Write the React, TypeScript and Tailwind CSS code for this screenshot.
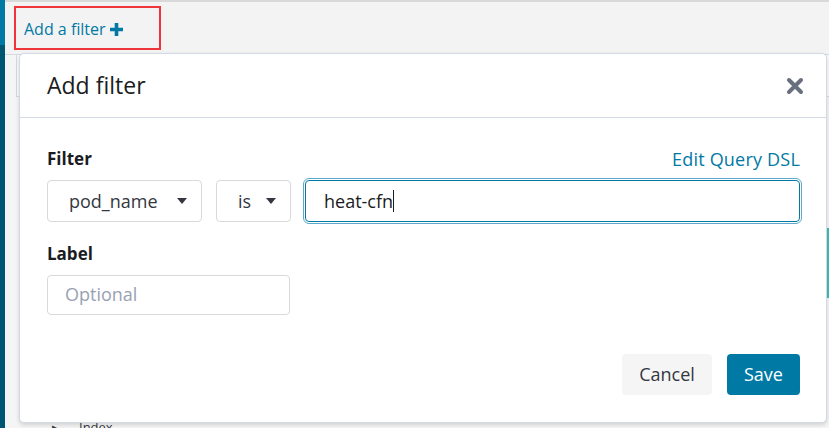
import React from 'react';

const Caret = () => (
  <svg width="10" height="6" viewBox="0 0 10 6" className="shrink-0">
    <path d="M0 0 L10 0 L5 6 Z" fill="#343741" />
  </svg>
);

const App: React.FC = () => {
  return (
    <div
      className="relative w-[829px] h-[428px] overflow-hidden bg-[#f5f5f5] flex"
      style={{ fontFamily: '"Open Sans", "Liberation Sans", sans-serif' }}
    >
      {/* side nav strip */}
      <div className="w-[5px] h-full flex flex-col">
        <div className="h-[45px] bg-[#0079a5]" />
        <div className="flex-1 bg-[#005571]" />
      </div>

      <div className="flex-1 flex flex-col">
        {/* filter bar */}
        <div className="h-[55px] border-t-2 border-[#d9d9d9] bg-[#f3f3f3] border-b border-b-[#d3dae6] pl-[9px] pt-[4px]">
          <div className="w-[147px] h-[44px] border-2 border-[#f0353a] flex items-center pl-[8px] pt-[2px] gap-[4px] text-[16px] text-[#0079a5]">
            <span>Add a filter</span>
            <svg width="13" height="13" viewBox="0 0 13 13">
              <path d="M4.7 0 H8.3 V4.7 H13 V8.3 H8.3 V13 H4.7 V8.3 H0 V4.7 H4.7 Z" fill="#0079a5" />
            </svg>
          </div>
        </div>
        <div className="h-[42px] border-b border-[#d3dae6] ml-[11px] border-l border-l-[#d3dae6] bg-[#fafafa]" />
        <div className="flex-1" />
        <div className="h-[6px] pl-[47px] text-[13px] leading-[10px] text-[#343741] flex gap-[20px]">
          <span>▸</span>
          <span>Index</span>
        </div>
      </div>

      {/* right edge teal marker */}
      <div className="absolute right-0 top-[228px] w-[2px] h-[70px] bg-[#3ebeb0]" />

      {/* popover */}
      <div className="absolute left-[19px] top-[53px] w-[808px] h-[370px] bg-white rounded-[5px] border border-[#d3dae6] shadow-[0_2px_4px_rgba(0,0,0,0.15)] flex flex-col">
        <div className="h-[64px] border-b border-[#d3dae6] flex items-center justify-between pl-[27px] pr-[22px]">
          <span className="text-[23px] text-[#1a1c21]">Add filter</span>
          <svg width="18" height="18" viewBox="0 0 18 18">
            <path d="M3 3 L15 15 M15 3 L3 15" stroke="#69707d" strokeWidth="4" strokeLinecap="round" />
          </svg>
        </div>

        <div className="flex-1 flex flex-col pl-[27px] pr-[26px] pt-[28px]">
          <div className="flex justify-between items-center h-[26px]">
            <span className="text-[17px] font-bold text-[#1a1c21]">Filter</span>
            <span className="text-[18px] text-[#0079a5] tracking-[0.2px]">Edit Query DSL</span>
          </div>
          <div className="flex items-center gap-[14px] mt-[8px]">
            <div className="w-[155px] h-[42px] border border-[#d9d9d9] rounded-[4px] flex items-center justify-between pl-[21px] pr-[14px] text-[18px] text-[#343741]">
              <span>pod_name</span>
              <Caret />
            </div>
            <div className="w-[75px] h-[42px] border border-[#d9d9d9] rounded-[4px] flex items-center justify-between pl-[21px] pr-[14px] text-[18px] text-[#343741]">
              <span>is</span>
              <Caret />
            </div>
            <div className="flex-1 h-[42px] border border-[#0079a5] rounded-[4px] outline-1 outline-offset-1 outline-[#5ea8cc] outline flex items-center pl-[18px] text-[18px] text-[#1a1c21]">
              <span>heat-cfn</span>
              <span className="w-px h-[22px] bg-[#1a1c21]" />
            </div>
          </div>

          <span className="text-[17px] font-bold text-[#1a1c21] mt-[19px]">Label</span>
          <div className="w-[243px] h-[40px] mt-[8px] border border-[#d9d9d9] rounded-[4px] flex items-center pl-[17px] text-[18px] text-[#98a2b3]">
            Optional
          </div>

          <div className="flex-1" />
          <div className="flex justify-end gap-[15px] pb-[27px]">
            <button className="w-[90px] h-[41px] rounded-[4px] bg-[#f5f5f5] text-[18px] text-[#343741]">
              Cancel
            </button>
            <button className="w-[73px] h-[41px] rounded-[4px] bg-[#0079a5] text-[18px] text-white">
              Save
            </button>
          </div>
        </div>
      </div>
    </div>
  );
};

export default App;
